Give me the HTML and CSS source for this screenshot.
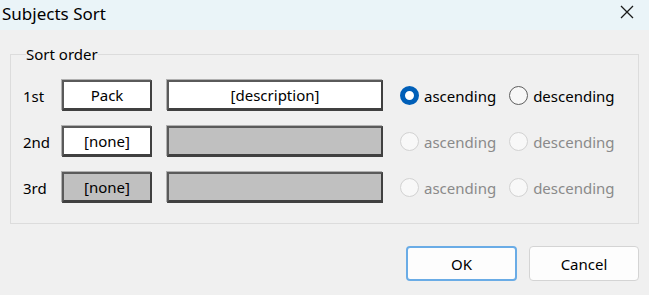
FILE: index.html
```html
<!DOCTYPE html>
<html lang="en">

<head>
  <meta charset="UTF-8" />
  <title>Subjects Sort</title>
  <link rel="stylesheet" href="styles.css">
</head>

<body>
  <div class="dialog">
    <div class="titlebar">
      <span class="title">Subjects Sort</span>
      <button class="close-btn" aria-label="Close">
        <svg width="14" height="14" viewBox="0 0 14 14">
          <path d="M1 1 L13 13 M13 1 L1 13" stroke="#1a1a1a" stroke-width="1.3" fill="none" />
        </svg>
      </button>
    </div>

    <div class="content">
      <fieldset class="group">
        <legend>Sort order</legend>

        <div class="row">
          <span class="row-label">1st</span>
          <div class="field small">Pack</div>
          <div class="field wide">[description]</div>
          <label class="radio"><span class="dot checked"></span>ascending</label>
          <label class="radio"><span class="dot"></span>descending</label>
        </div>

        <div class="row">
          <span class="row-label">2nd</span>
          <div class="field small">[none]</div>
          <div class="field wide off"></div>
          <label class="radio disabled"><span class="dot"></span>ascending</label>
          <label class="radio disabled"><span class="dot"></span>descending</label>
        </div>

        <div class="row">
          <span class="row-label">3rd</span>
          <div class="field small off">[none]</div>
          <div class="field wide off"></div>
          <label class="radio disabled"><span class="dot"></span>ascending</label>
          <label class="radio disabled"><span class="dot"></span>descending</label>
        </div>
      </fieldset>

      <div class="actions">
        <button class="btn default">OK</button>
        <button class="btn">Cancel</button>
      </div>
    </div>
  </div>
</body>

</html>
```

FILE: styles.css
```css
* {
  margin: 0;
  padding: 0;
  box-sizing: border-box;
}

body {
  width: 649px;
  height: 295px;
  overflow: hidden;
  background-color: #f0f0f0;
  font-family: "Noto Sans", "Open Sans", sans-serif;
  font-size: 15px;
  color: #000;
}

.titlebar {
  height: 30px;
  background-color: #eaf4f8;
  display: flex;
  align-items: center;
  justify-content: space-between;
}

.title {
  font-size: 17px;
  padding-left: 2px;
  margin-top: -4px;
}

.close-btn {
  width: 46px;
  height: 30px;
  border: none;
  background: transparent;
  display: flex;
  align-items: center;
  justify-content: center;
  margin-right: -1px;
  margin-top: -6px;
}

.content {
  padding: 14px 10px 0 10px;
}

.group {
  border: 1px solid #dcdcdc;
  padding: 16px 0 20px 12px;
  display: flex;
  flex-direction: column;
  gap: 15px;
  height: 180px;
}

.group legend {
  margin-left: 3px;
  padding: 0;
  font-size: 15px;
}

.row {
  display: flex;
  align-items: center;
  height: 31px;
}

.row-label {
  width: 39px;
}

.field {
  height: 31px;
  background: #fff;
  border: 2px solid #404040;
  border-top-color: #5a5a5a;
  border-left-color: #5a5a5a;
  border-bottom-width: 3px;
  box-shadow: -1px -1px 0 #b0b0b0;
  display: flex;
  align-items: center;
  justify-content: center;
  padding-bottom: 1px;
}

.field.small {
  width: 90px;
  margin-right: 15px;
}

.field.wide {
  width: 216px;
  margin-right: 17px;
}

.field.off {
  background: #c0c0c0;
}

.radio {
  display: flex;
  align-items: center;
  margin-right: 13px;
}

.dot {
  width: 19px;
  height: 19px;
  border-radius: 50%;
  border: 1px solid #5e5e5e;
  background: #f7f7f7;
  margin-right: 5px;
}

.dot.checked {
  border: 5px solid #005fb8;
  background: #fff;
}

.radio.disabled {
  color: #8a8a8a;
}

.radio.disabled .dot {
  border-color: #d2d2d2;
  background: #f8f8f8;
}

.actions {
  display: flex;
  justify-content: flex-end;
  gap: 12px;
  margin-top: 22px;
}

.btn {
  width: 110px;
  height: 35px;
  border: 1px solid #d4d4d4;
  border-radius: 4px;
  background: #fdfdfd;
  font-family: "Noto Sans", "Open Sans", sans-serif;
  font-size: 15px;
}

.btn.default {
  width: 111px;
  border: 2px solid #6aace6;
}
```
